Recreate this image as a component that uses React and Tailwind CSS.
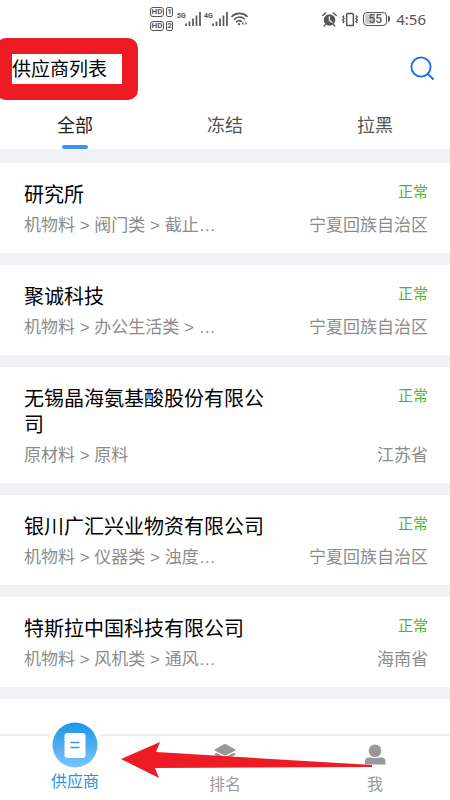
import { useState } from "react";

const TABS = ["全部", "冻结", "拉黑"];

const SUPPLIERS = [
  { id: 1, name: "研究所", category: "机物料 > 阀门类 > 截止…", region: "宁夏回族自治区", status: "正常" },
  { id: 2, name: "聚诚科技", category: "机物料 > 办公生活类 > …", region: "宁夏回族自治区", status: "正常" },
  { id: 3, name: "无锡晶海氨基酸股份有限公司", category: "原材料 > 原料", region: "江苏省", status: "正常" },
  { id: 4, name: "银川广汇兴业物资有限公司", category: "机物料 > 仪器类 > 浊度…", region: "宁夏回族自治区", status: "正常" },
  { id: 5, name: "特斯拉中国科技有限公司", category: "机物料 > 风机类 > 通风…", region: "海南省", status: "正常" },
];

function HdBadge({ sim }) {
  return (
    <div className="flex gap-[2px] text-[8px] leading-[8px] font-bold">
      <span className="w-[14px] rounded-[3px] border border-[#555] text-center">HD</span>
      <span className="w-[7px] rounded-[2px] border border-[#555] text-center">{sim}</span>
    </div>
  );
}

function Signal({ label }) {
  return (
    <div className="flex items-start">
      <span className="w-2 text-[7px] leading-[8px] font-bold">{label}</span>
      <svg className="h-[14px] w-4" viewBox="0 0 16 14" stroke="currentColor" strokeWidth="1.7">
        <path d="M1 11.5V14M4.5 9.5V14M8 6.5V14M11.5 3.5V14M15 0V14" />
      </svg>
    </div>
  );
}

function StatusBar() {
  return (
    <div className="flex h-[38px] shrink-0 items-center justify-between pr-6 pl-[150px] font-['Roboto',sans-serif] text-[#555]">
      <div className="flex items-center gap-[3px]">
        <div className="mr-px flex flex-col gap-1">
          <HdBadge sim="1" />
          <HdBadge sim="2" />
        </div>
        <Signal label="5G" />
        <Signal label="4G" />
        <svg className="h-4 w-[17px]" viewBox="0 0 17 16" fill="none" stroke="currentColor" strokeWidth="1.6" strokeLinecap="round">
          <path d="M1 5.4C5 1.4 12 1.4 16 5.4M3.4 8.2C6.2 5.4 10.8 5.4 13.2 7.8M5.6 11C7 9.6 9 9.4 10.4 10.4" />
          <circle cx="8" cy="13.2" r="1.1" fill="currentColor" stroke="none" />
          <path d="M12.4 10.8l-1.6 1.7 1.6 1.7zM14.4 10.8l1.6 1.7-1.6 1.7z" fill="currentColor" stroke="none" />
        </svg>
      </div>

      <div className="flex items-center">
        <svg className="mr-1 h-[15px] w-[15px]" viewBox="0 0 15 15" fill="none" stroke="currentColor" strokeLinecap="round">
          <circle cx="7.5" cy="8" r="5.8" fill="currentColor" stroke="none" />
          <path d="M.8 3.6L3.6 1M14.2 3.6L11.4 1M3.4 12.6L2.2 14M11.6 12.6L12.8 14" strokeWidth="1.4" />
          <path d="M7.4 4.6V8.4L10 10.2" stroke="white" strokeWidth="1.2" />
        </svg>
        <svg className="mr-1 h-[15px] w-[18px]" viewBox="0 0 18 15" fill="none" stroke="currentColor">
          <rect x="5.6" y="1.4" width="6.8" height="12.2" rx="1.2" strokeWidth="1.5" />
          <path d="M3 3.5L1.8 5L3 6.5L1.8 8L3 9.5L1.8 11M15 3.5L16.2 5L15 6.5L16.2 8L15 9.5L16.2 11" strokeWidth="1.3" />
        </svg>
        <span className="h-[14px] w-6 rounded-[4px] border border-[#555] p-px">
          <span className="block rounded-[2px] bg-linear-to-r from-[#ccc] from-50% to-white to-50% text-center text-[12px] leading-[10px] font-medium">55</span>
        </span>
        <span className="ml-px mr-[6px] h-[6px] w-[2px] rounded-r-sm bg-[#555]" />
        <span className="font-['Noto_Sans',sans-serif] text-[15px] leading-5">4:56</span>
      </div>
    </div>
  );
}

function SupplierCard({ supplier }) {
  return (
    <li className="bg-white pt-[18px] pr-[22px] pb-[14px] pl-6">
      <div className="flex items-start justify-between">
        <h2 className="w-3/5 max-w-[246px] text-[20px] leading-[26px] text-black">{supplier.name}</h2>
        <span className="text-[15px] leading-5 text-[#54b32b]">{supplier.status}</span>
      </div>
      <div className="mt-1 flex items-baseline justify-between text-[17px] leading-[26px] text-[#8c8c8c]">
        <p className="font-['Liberation_Sans','Noto_Sans_CJK_SC',sans-serif]">{supplier.category}</p>
        <p className="shrink-0">{supplier.region}</p>
      </div>
    </li>
  );
}

function BottomNav() {
  return (
    <nav className="relative flex h-[66px] shrink-0 border-t-2 border-[#eeeff1] bg-white text-[16px] leading-5 text-[#999]">
      <a href="#suppliers" className="-mt-[18px] flex flex-1 flex-col items-center text-[#2593e0]">
        <span className="-mb-[2px] rounded-full bg-white p-1">
          <svg className="h-[46px] w-[46px]" viewBox="0 0 46 46">
            <defs>
              <linearGradient id="navBlue" x1="0" y1="0" x2="0" y2="1">
                <stop offset="0" stopColor="#1e94e9" />
                <stop offset="1" stopColor="#7cc4fb" />
              </linearGradient>
            </defs>
            <circle cx="23" cy="23" r="22.5" fill="url(#navBlue)" />
            <rect x="12.5" y="11" width="21" height="25" rx="3" fill="white" />
            <path d="M18.5 20.5H27.5M18.5 25.5H27.5" stroke="#2b9bea" strokeWidth="1.6" />
          </svg>
        </span>
        <span>供应商</span>
      </a>
      <a href="#ranking" className="flex flex-1 flex-col items-center pt-2">
        <svg className="h-[21px] w-[22px]" viewBox="0 0 22 21" fill="#98989b">
          <path d="M10 .3Q11-.2 12 .3L21 5.2Q22 6 21 6.7L12 11.3Q11 11.8 10 11.3L1 6.7Q0 6 1 5.2Z" />
          <path d="M.6 9.4L2.8 9L11 13.3L19.2 9L21.4 9.4Q21.8 10.4 21 10.9L12 15.6Q11 16.1 10 15.6L1 10.9Q.2 10.4 .6 9.4Z" />
        </svg>
        <span className="mt-2">排名</span>
      </a>
      <a href="#me" className="flex flex-1 flex-col items-center pt-2">
        <svg className="h-[21px] w-[22px]" viewBox="0 0 22 21" fill="#98989b">
          <circle cx="11" cy="6.8" r="6.3" />
          <path d="M.8 20.4V17.5Q.8 13.4 5 13.4H6.5Q11 15 15.5 13.4H17.5Q21.4 13.4 21.4 17.5V20.4Z" />
        </svg>
        <span className="mt-2">我</span>
      </a>

      {/* pointer to the active entry */}
      <svg className="pointer-events-none absolute top-[6px] left-[121px] h-9 w-[251px]" viewBox="0 0 251 36" fill="#ed1c24">
        <path d="M0 17L39 0L35 10L251 23V25L34 26L38 36Z" />
      </svg>
    </nav>
  );
}

export default function App() {
  const [tab, setTab] = useState("全部");

  return (
    <div className="flex h-screen flex-col overflow-hidden bg-white font-['Noto_Sans_CJK_SC',sans-serif]">
      <StatusBar />

      <header className="relative flex h-[60px] shrink-0 items-center justify-between px-3">
        <div className="pointer-events-none absolute top-0 -left-1 h-[62px] w-[142px] rounded-[10px] border-[16px] border-[#ed1c24]" />
        <h1 className="text-[19px] leading-7 text-black">供应商列表</h1>
        <button aria-label="搜索" className="mr-1">
          <svg className="h-6 w-6" viewBox="0 0 24 24" fill="none" stroke="#1c6ff0" strokeWidth="1.9" strokeLinecap="round">
            <circle cx="11" cy="11" r="9.6" />
            <path d="M17.8 17.8L23 23" />
          </svg>
        </button>
      </header>

      <div className="flex h-[51px] shrink-0">
        {TABS.map((t) => (
          <button key={t} onClick={() => setTab(t)} className="flex flex-1 flex-col items-center justify-end">
            <span className={`text-[18px] leading-7 ${t === tab ? "text-[#222]" : "text-[#555]"}`}>{t}</span>
            <span className={`mt-[7px] h-1 w-[26px] rounded-full ${t === tab ? "bg-[#3a94ee]" : ""}`} />
          </button>
        ))}
      </div>

      <ul className="flex min-h-0 flex-1 flex-col gap-3 overflow-hidden bg-[#f0f2f5] pt-[14px]">
        {SUPPLIERS.map((s) => (
          <SupplierCard key={s.id} supplier={s} />
        ))}
        <li className="flex-1 bg-white" />
      </ul>

      <BottomNav />
    </div>
  );
}
